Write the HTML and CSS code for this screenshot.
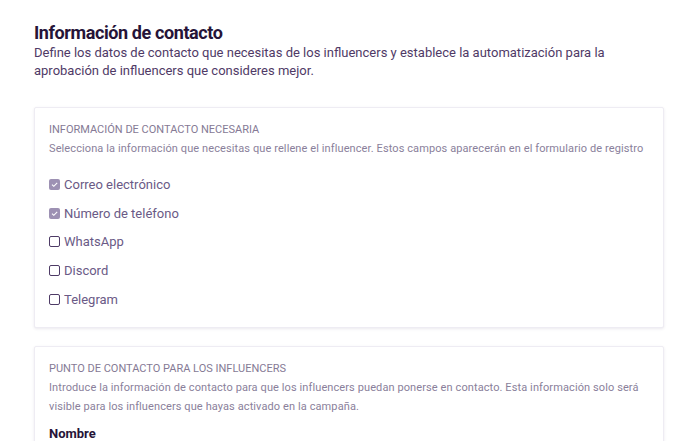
FILE: index.html
```html
<!DOCTYPE html>
<html lang="es">

<head>
    <meta charset="UTF-8">
    <meta name="viewport" content="width=device-width, initial-scale=1.0">
    <title>Información de contacto</title>
    <link rel="stylesheet" href="styles.css">
</head>

<body>

    <div class="page">
        <h1 class="pageTitle">Información de contacto</h1>
        <p class="pageIntro">Define los datos de contacto que necesitas de los influencers y establece la automatización para la aprobación de influencers que consideres mejor.</p>

        <section class="card">
            <h2 class="cardTitle">Información de contacto necesaria</h2>
            <p class="cardText">Selecciona la información que necesitas que rellene el influencer. Estos campos aparecerán en el formulario de registro</p>

            <ul class="fieldList">
                <li><span class="box checked"><svg viewBox="0 0 11 11" width="11" height="11"><path d="M3 5.6 L4.8 7.3 L8.2 3.8" fill="none" stroke="#fff" stroke-width="1.1"/></svg></span>Correo electrónico</li>
                <li><span class="box checked"><svg viewBox="0 0 11 11" width="11" height="11"><path d="M3 5.6 L4.8 7.3 L8.2 3.8" fill="none" stroke="#fff" stroke-width="1.1"/></svg></span>Número de teléfono</li>
                <li><span class="box"></span>WhatsApp</li>
                <li><span class="box"></span>Discord</li>
                <li><span class="box"></span>Telegram</li>
            </ul>
        </section>

        <section class="card">
            <h2 class="cardTitle">Punto de contacto para los influencers</h2>
            <p class="cardText">Introduce la información de contacto para que los influencers puedan ponerse en contacto. Esta información solo será visible para los influencers que hayas activado en la campaña.</p>

            <h3 class="fieldLabel">Nombre</h3>
        </section>
    </div>

</body>

</html>
```

FILE: styles.css
```css
body {
    margin: 0;
    padding: 0;
    background-color: #fff;
    font-family: Roboto, "Liberation Sans", sans-serif;
    color: #2b1a3d;
}

.page {
    padding: 22px 24px 0 34px;
}

.pageTitle {
    margin: 0;
    font-size: 18px;
    font-weight: 700;
    line-height: 22px;
    letter-spacing: -0.4px;
    color: #261438;
}

.pageIntro {
    margin: 0;
    font-size: 13px;
    line-height: 18px;
    color: #4f3a66;
    max-width: 600px;
}

.card {
    margin-top: 27px;
    padding: 14px 14px 13px;
    border: 1px solid #eeecf3;
    border-radius: 2px;
    box-shadow: 0 1px 3px rgba(60, 40, 90, 0.1);
    background-color: #fff;
}

.card + .card {
    margin-top: 18px;
}

.cardTitle {
    margin: 0;
    font-size: 11px;
    font-weight: 400;
    line-height: 16px;
    text-transform: uppercase;
    color: #857a95;
}

.cardText {
    margin: 1px 0 0;
    font-size: 11px;
    line-height: 19px;
    letter-spacing: 0.1px;
    color: #8a7f9b;
}

.fieldList {
    list-style: none;
    margin: 12px 0 0;
    padding: 0;
}

.fieldList li {
    display: flex;
    align-items: center;
    gap: 4px;
    height: 28.75px;
    font-size: 13px;
    color: #6a5a86;
}

.box {
    box-sizing: border-box;
    width: 11px;
    height: 11px;
    border: 1.5px solid #4e3b66;
    border-radius: 2px;
    display: flex;
}

.box.checked {
    border: none;
    background-color: #9d91b3;
}

.fieldLabel {
    margin: 10px 0 0;
    font-size: 13px;
    font-weight: 700;
    line-height: 16px;
    color: #261438;
}
```
